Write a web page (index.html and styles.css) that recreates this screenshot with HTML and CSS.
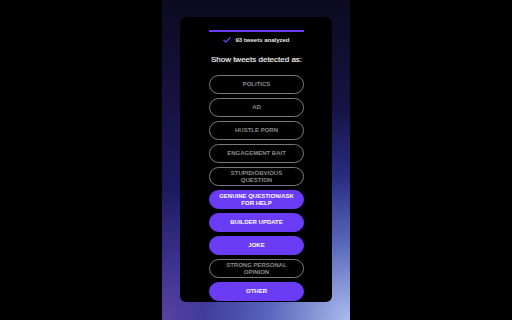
FILE: index.html
```html
<!DOCTYPE html>
<html>
<head>
<meta charset="utf-8">
<link rel="stylesheet" href="styles.css">
</head>
<body>
<div class="stage">
  <div class="panel">
    <div class="progress"></div>
    <div class="status">
      <svg class="check" width="8" height="6" viewBox="0 0 8 6"><polyline points="0.8,3.2 2.8,5 7.2,0.8" fill="none" stroke="#6b3cf6" stroke-width="1.3" stroke-linecap="round" stroke-linejoin="round"/></svg>
      <span>93 tweets analyzed</span>
    </div>
    <div class="title">Show tweets detected as:</div>
    <div class="list">
      <div class="btn">POLITICS</div>
      <div class="btn">AD</div>
      <div class="btn">HUSTLE PORN</div>
      <div class="btn">ENGAGEMENT BAIT</div>
      <div class="btn">STUPID/OBVIOUS QUESTION</div>
      <div class="btn on">GENUINE QUESTION/ASK FOR HELP</div>
      <div class="btn on">BUILDER UPDATE</div>
      <div class="btn on">JOKE</div>
      <div class="btn">STRONG PERSONAL OPINION</div>
      <div class="btn on">OTHER</div>
    </div>
  </div>
</div>
</body>
</html>
```
FILE: styles.css
```css
html, body {
  margin: 0;
  padding: 0;
  background: #000;
  width: 512px;
  height: 320px;
  overflow: hidden;
  font-family: "Liberation Sans", Arial, sans-serif;
}
.stage {
  width: 188px;
  height: 320px;
  margin: 0 auto;
  box-sizing: border-box;
  padding: 17px 18px 0 18px;
  background:
    radial-gradient(ellipse 120% 70% at 100% 100%, rgba(172,188,236,1) 0%, rgba(100,120,205,0.8) 35%, rgba(55,65,170,0.45) 65%, rgba(50,60,160,0) 95%),
    radial-gradient(ellipse 90% 45% at 0% 100%, rgba(100,66,160,0.95) 0%, rgba(70,50,140,0.5) 50%, rgba(50,40,130,0) 90%),
    linear-gradient(to bottom, #0c0a1f 0%, #15123f 30%, #1c1a5e 60%, #2a2a82 100%);
}
.panel {
  height: 285px;
  background: #000;
  border-radius: 6px;
  overflow: hidden;
  box-sizing: border-box;
  padding: 13px 28px 0 29px;
  display: flex;
  flex-direction: column;
}
.progress {
  height: 2px;
  background: #6b3cf6;
}
.status {
  margin-top: 4px;
  height: 8px;
  display: flex;
  align-items: center;
  justify-content: center;
  gap: 4px;
  font-size: 6px;
  font-weight: bold;
  color: #e6e6e6;
}
.check {
  display: block;
}
.title {
  margin-top: 11px;
  height: 10px;
  line-height: 10px;
  font-size: 8px;
  color: #f5f5f5;
  text-align: center;
  -webkit-text-stroke: 0.15px #f5f5f5;
}
.list {
  margin-top: 10px;
  display: flex;
  flex-direction: column;
  gap: 4px;
}
.btn {
  height: 19px;
  box-sizing: border-box;
  border: 1px solid #7a7a7a;
  border-radius: 10px;
  display: flex;
  align-items: center;
  justify-content: center;
  text-align: center;
  padding: 0 7px;
  font-size: 6px;
  line-height: 7px;
  font-weight: bold;
  color: #8c8c8c;
}
.btn.on {
  background: #6b3cf6;
  border-color: #6b3cf6;
  color: #fff;
}
```
